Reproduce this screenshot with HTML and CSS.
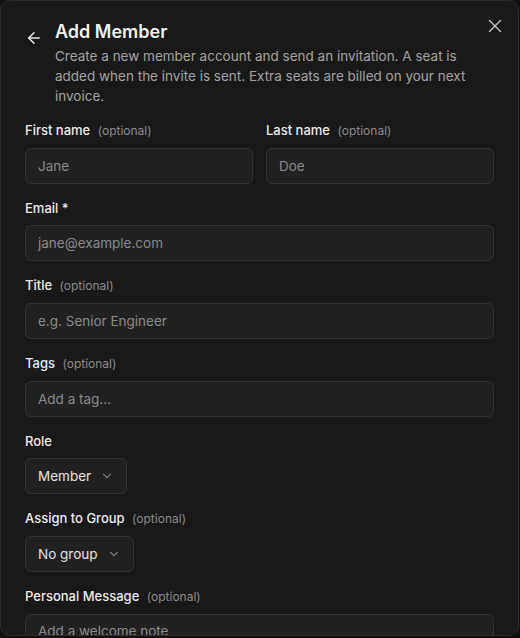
FILE: index.html
```html
<!DOCTYPE html>
<html>
<head>
<meta charset="utf-8">
<link rel="stylesheet" href="styles.css">
</head>
<body>
<div class="dialog">
  <button class="close" aria-label="Close">
    <svg width="14" height="14" viewBox="0 0 14 14" fill="none" stroke="currentColor" stroke-width="1.4" stroke-linecap="round"><path d="M1.5 1.5l11 11M12.5 1.5l-11 11"/></svg>
  </button>
  <div class="header">
    <button class="back" aria-label="Back">
      <svg width="18" height="18" viewBox="0 0 24 24" fill="none" stroke="currentColor" stroke-width="2" stroke-linecap="round" stroke-linejoin="round"><path d="m12 19-7-7 7-7"/><path d="M19 12H5"/></svg>
    </button>
    <div class="head-text">
      <h1 class="title">Add Member</h1>
      <p class="desc">Create a new member account and send an invitation. A seat is added when the invite is sent. Extra seats are billed on your next invoice.</p>
    </div>
  </div>
  <div class="form">
    <div class="row">
      <div class="field">
        <label class="label">First name <span class="opt">(optional)</span></label>
        <div class="input"><span class="ph">Jane</span></div>
      </div>
      <div class="field">
        <label class="label">Last name <span class="opt">(optional)</span></label>
        <div class="input"><span class="ph">Doe</span></div>
      </div>
    </div>
    <div class="field">
      <label class="label">Email *</label>
      <div class="input"><span class="ph">jane@example.com</span></div>
    </div>
    <div class="field">
      <label class="label">Title <span class="opt">(optional)</span></label>
      <div class="input"><span class="ph">e.g. Senior Engineer</span></div>
    </div>
    <div class="field">
      <label class="label">Tags <span class="opt">(optional)</span></label>
      <div class="input"><span class="ph">Add a tag...</span></div>
    </div>
    <div class="field">
      <label class="label">Role</label>
      <button class="select"><span>Member</span>
        <svg class="chev" width="14" height="14" viewBox="0 0 24 24" fill="none" stroke="currentColor" stroke-width="2" stroke-linecap="round" stroke-linejoin="round"><path d="m6 9 6 6 6-6"/></svg>
      </button>
    </div>
    <div class="field">
      <label class="label">Assign to Group <span class="opt">(optional)</span></label>
      <button class="select"><span>No group</span>
        <svg class="chev" width="14" height="14" viewBox="0 0 24 24" fill="none" stroke="currentColor" stroke-width="2" stroke-linecap="round" stroke-linejoin="round"><path d="m6 9 6 6 6-6"/></svg>
      </button>
    </div>
    <div class="field">
      <label class="label">Personal Message <span class="opt">(optional)</span></label>
      <div class="textarea"><span class="ph">Add a welcome note</span></div>
    </div>
  </div>
</div>
</body>
</html>
```

FILE: styles.css
```css
html, body {
  margin: 0;
  padding: 0;
  background: #101010;
}
body {
  width: 520px;
  height: 638px;
  overflow: hidden;
  font-family: Inter, "Noto Sans", sans-serif;
  color: #ededed;
}
.dialog {
  position: relative;
  box-sizing: border-box;
  width: 519px;
  height: 636px;
  background: #191919;
  border: 1px solid #2b2b2b;
  border-radius: 10px;
  padding: 17px 24px 0 24px;
  overflow: hidden;
}
.close {
  position: absolute;
  top: 16px;
  right: 14px;
  width: 18px;
  height: 18px;
  padding: 0;
  border: 0;
  background: none;
  color: #c4c4c4;
  display: flex;
  align-items: center;
  justify-content: center;
}
.header {
  display: flex;
  align-items: flex-start;
  gap: 12px;
}
.back {
  margin-top: 11px;
  width: 18px;
  height: 18px;
  padding: 0;
  border: 0;
  background: none;
  color: #e6e6e6;
  display: flex;
}
.head-text {
  flex: 1;
}
.title {
  margin: 0;
  font-size: 18px;
  line-height: 28px;
  font-weight: 600;
  color: #f3f3f3;
}
.desc {
  margin: 0;
  font-size: 13.5px;
  line-height: 20px;
  color: #a3a3a3;
}
.form {
  margin-top: 15px;
  display: flex;
  flex-direction: column;
  gap: 15px;
}
.row {
  display: grid;
  grid-template-columns: 1fr 1fr;
  gap: 13px;
}
.field {
  display: flex;
  flex-direction: column;
  align-items: flex-start;
  gap: 8px;
}
.label {
  font-size: 13px;
  line-height: 18px;
  font-weight: 500;
  color: #ececec;
}
.opt {
  margin-left: 4px;
  font-size: 12px;
  font-weight: 400;
  color: #8c8c8c;
}
.input, .textarea {
  box-sizing: border-box;
  align-self: stretch;
  height: 36px;
  background: #212121;
  border: 1px solid #333333;
  border-radius: 6px;
  padding: 0 12px;
  display: flex;
  align-items: center;
  font-size: 13.5px;
}
.textarea {
  height: 80px;
  align-items: flex-start;
  padding-top: 8px;
}
.ph {
  color: #8a8a8a;
}
.select {
  box-sizing: border-box;
  height: 36px;
  background: #212121;
  border: 1px solid #333333;
  border-radius: 6px;
  padding: 0 12px;
  display: flex;
  align-items: center;
  gap: 9px;
  font-family: inherit;
  font-size: 13.5px;
  color: #e4e4e4;
}
.chev {
  color: #7a7a7a;
}
```
